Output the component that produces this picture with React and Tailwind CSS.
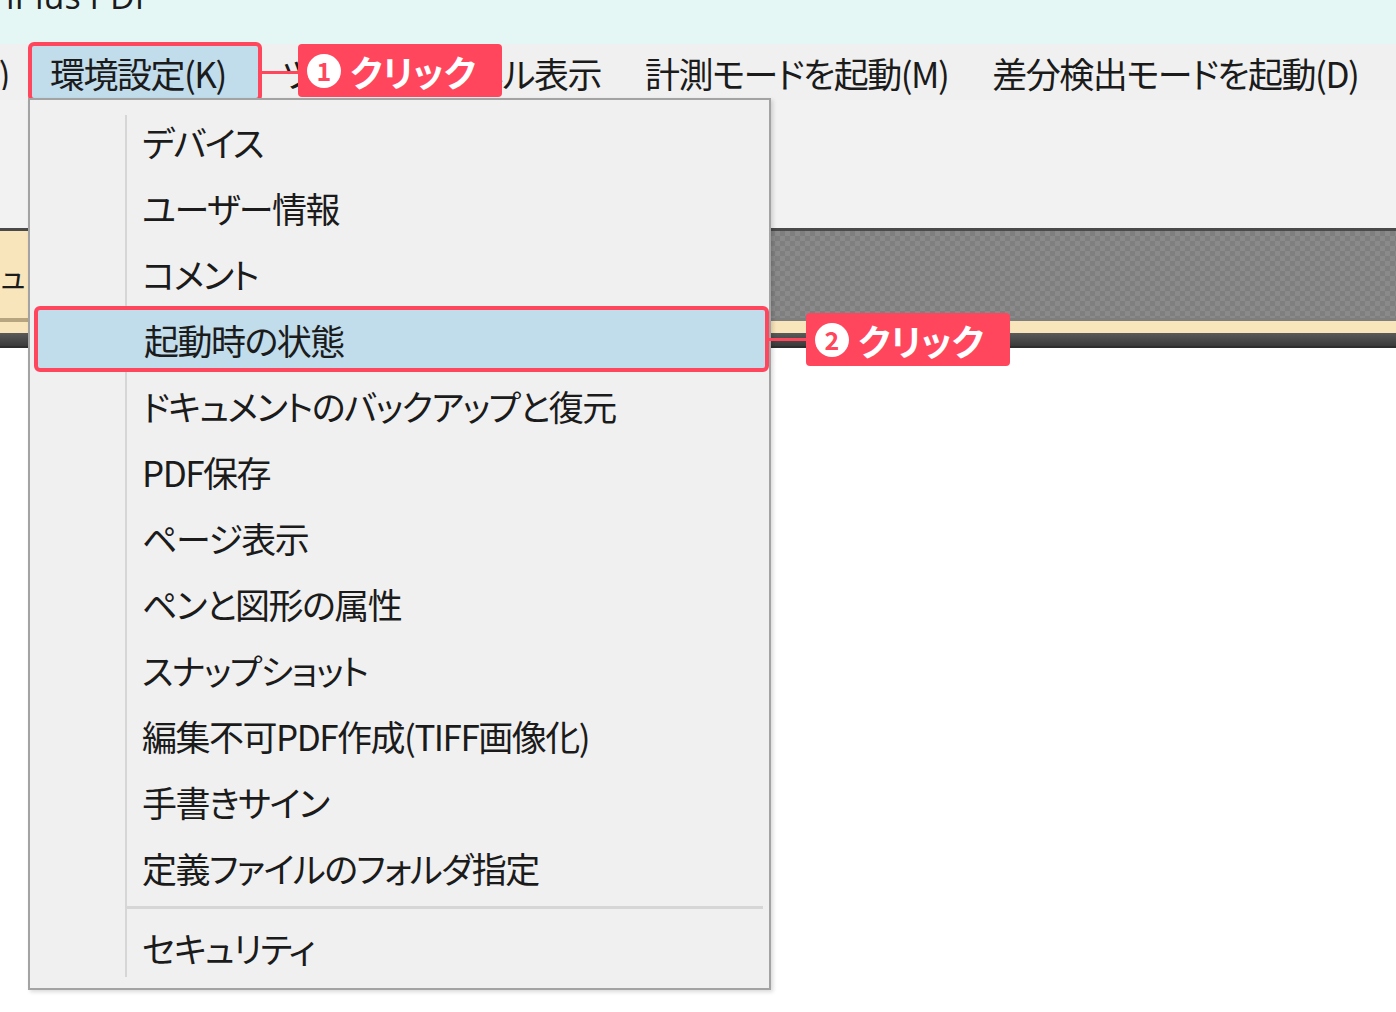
import React from "react";

const menuItems = [
  "デバイス",
  "ユーザー情報",
  "コメント",
  "起動時の状態",
  "ドキュメントのバックアップと復元",
  "PDF保存",
  "ページ表示",
  "ペンと図形の属性",
  "スナップショット",
  "編集不可PDF作成(TIFF画像化)",
  "手書きサイン",
  "定義ファイルのフォルダ指定",
];

const Callout = ({ num, className }) => (
  <div
    className={`absolute flex items-center h-[53px] w-[204px] rounded-[4px] bg-[#ff465d] pl-[9px] ${className}`}
  >
    <span className="flex items-center justify-center w-[34px] h-[34px] rounded-full bg-white text-[#ff465d] text-[25px] font-bold leading-none">
      {num}
    </span>
    <span className="ml-[9px] text-white text-[36px] font-bold leading-none [font-feature-settings:'palt']">
      クリック
    </span>
  </div>
);

const App = () => {
  return (
    <div className="relative w-[1396px] h-[1012px] overflow-hidden bg-white text-[#1b1b1b] font-['Noto_Sans_CJK_JP','Noto_Sans',sans-serif]">
      {/* title strip, cut at the top */}
      <div className="h-[44px] bg-[#e4f7f5] overflow-hidden">
        <div className="-mt-[24px] pl-[6px] text-[34px] leading-[40px] font-['Open_Sans',sans-serif]">
          iPlus PDF
        </div>
      </div>

      {/* menu bar */}
      <div className="flex items-center h-[56px] bg-[#f0f0f0] text-[35px] leading-none tracking-[-1.5px] whitespace-nowrap overflow-hidden [font-feature-settings:'palt']">
        <div className="flex justify-end w-[31px] shrink-0 overflow-hidden">
          <span className="pr-[22px]">表示(V)</span>
        </div>
        <div className="flex items-center shrink-0 w-[229px] h-[52px] pl-[19px] bg-[#c1dcea] border-r-2 border-[#9cc8e2]">
          環境設定(K)
        </div>
        <div className="flex justify-between shrink-0 w-[363px] px-[22px]">
          <span>ツール(T)</span>
          <span>パネル表示</span>
        </div>
        <span className="px-[22px]">計測モードを起動(M)</span>
        <span className="px-[22px]">差分検出モードを起動(D)</span>
        <span className="px-[22px] text-[#d9a05a]">ヘ</span>
      </div>

      {/* toolbar area */}
      <div className="h-[128px] bg-[#f2f2f2]" />

      {/* document band */}
      <div className="flex flex-col h-[120px] bg-[#3f3f3f]">
        <div className="h-[3px] bg-[#4a4a4a]" />
        <div className="flex h-[87px]">
          <div className="flex items-center w-[240px] bg-[#f9e5bb] text-[30px] leading-none overflow-hidden">
            <span className="-ml-[2px]">ュ,</span>
          </div>
          <div className="flex-1 bg-[#858585] [background-image:repeating-conic-gradient(#8a8a8a_0_25%,#7f7f7f_0_50%)] [background-size:10px_10px]" />
        </div>
        <div className="flex h-[9px]">
          <div className="w-[240px] flex flex-col">
            <div className="h-[4px] bg-[#b6a57e]" />
            <div className="flex-1 bg-[#f9e5bb]" />
          </div>
          <div className="flex-1 flex flex-col">
            <div className="flex-1 bg-[#7e7e7e]" />
            <div className="h-[6px] bg-[#f9e5bb]" />
          </div>
        </div>
        <div className="flex h-[6px]">
          <div className="w-[240px] bg-[#f9e5bb]" />
          <div className="flex-1 bg-[#f9e5bb]" />
        </div>
        <div className="h-[13px] bg-gradient-to-b from-[#5a5a5a] to-[#3a3a3a]" />
        <div className="h-[2px] bg-[#2e2e2e]" />
      </div>

      {/* highlight on the menu title */}
      <div className="absolute left-[28px] top-[42px] w-[234px] h-[60px] rounded-[6px] border-4 border-[#ff465d]" />

      {/* dropdown menu */}
      <div className="absolute left-[28px] top-[98px] w-[743px] h-[892px] border-2 border-[#a3a3a3] bg-[#f0f0f0] shadow-[2px_2px_4px_rgba(0,0,0,0.15)]">
        <div className="relative flex flex-col pt-[8px] text-[35px] leading-none tracking-[-1.5px] [font-feature-settings:'palt']">
          <div className="absolute left-[95px] top-[15px] w-[2px] h-[862px] bg-[#d6d6d6]" />
          {menuItems.map((label, i) =>
            i === 3 ? (
              <div
                key={label}
                className="relative flex items-center h-[66px] ml-[4px] pl-[106px] rounded-[6px] border-4 border-[#ff465d] bg-[#c1dcea]"
              >
                {label}
              </div>
            ) : (
              <div key={label} className="relative flex items-center h-[66px] pl-[112px]">
                {label}
              </div>
            )
          )}
          <div className="flex items-center h-[14px] pl-[97px] pr-[6px]">
            <div className="h-[3px] w-full bg-[#d6d6d6]" />
          </div>
          <div className="relative flex items-center h-[66px] pl-[112px]">セキュリティ</div>
        </div>
      </div>

      {/* connector lines and callouts */}
      <div className="absolute left-[262px] top-[71px] w-[36px] h-[3px] bg-[#ff465d]" />
      <Callout num="1" className="left-[298px] top-[44px]" />
      <div className="absolute left-[769px] top-[338px] w-[37px] h-[3px] bg-[#ff465d]" />
      <Callout num="2" className="left-[806px] top-[313px]" />
    </div>
  );
};

export default App;
